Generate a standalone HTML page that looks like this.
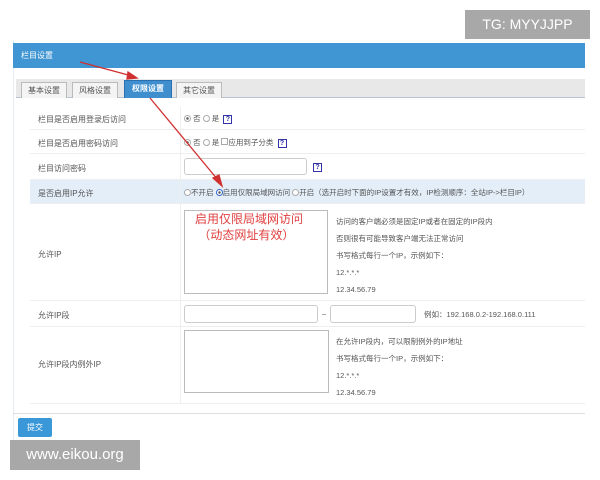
<!DOCTYPE html>
<html><head><meta charset="utf-8"><style>
*{margin:0;padding:0;box-sizing:border-box}
body{width:600px;height:480px;background:#fff;position:relative;overflow:hidden;font-family:"Liberation Sans","Noto Sans CJK SC",sans-serif;font-size:8px;color:#555}
.a{position:absolute}
.tab{position:absolute;top:82px;height:16px;border:1px solid #bbb;border-bottom:none;background:#f4f4f4;font-size:8px;line-height:15px;text-align:center;color:#555}
.row{position:absolute;left:30px;width:555px;border-bottom:1px solid #eee}
.lbl{position:absolute;left:8px;font-size:8px;color:#555}
.in{position:absolute;border:1px solid #ccc;border-radius:3px;background:#fff}
.r{display:inline-block;width:7px;height:7px;border:1px solid #aaa;border-radius:50%;vertical-align:-1px;background:#fff}
.r.on{background:radial-gradient(#555 30%,#fff 40%)}
.q{display:inline-block;width:9px;height:9px;border:1px solid #33a;font-size:7px;line-height:7px;text-align:center;color:#33a;font-weight:bold}
.t{position:absolute;font-size:7.5px;color:#555}
</style></head><body>
<div class="a" style="left:465px;top:10px;width:125px;height:29px;background:#a8a8a8;color:#fff;font-size:14px;line-height:29px;text-align:center">TG: MYYJJPP</div>
<div class="a" style="left:13px;top:40px;width:572px;height:400px;background:#fff;border-left:1px solid #e4ebf2"></div>
<div class="a" style="left:13px;top:43px;width:572px;height:25px;background:#3f96d2;color:#fff;font-size:8px;line-height:25px;padding-left:8px">栏目设置</div>
<div class="a" style="left:16px;top:79px;width:569px;height:19px;background:#e8e8e8;border-bottom:1px solid #b8c4d4"></div>
<div class="tab" style="left:21px;width:46px">基本设置</div>
<div class="tab" style="left:72px;width:46px">风格设置</div>
<div class="tab" style="left:124px;width:48px;background:#3f8fcf;color:#fff;border-color:#2a70b0;top:80px;height:18px;font-weight:bold">权限设置</div>
<div class="tab" style="left:176px;width:46px">其它设置</div>

<div class="row" style="top:107px;height:23px"><span class="lbl" style="top:7px">栏目是否启用登录后访问</span><span class="t" style="left:154px;top:6px"><span class="r on"></span> 否 <span class="r"></span> 是 &nbsp;<span class="q">?</span></span></div>
<div class="row" style="top:130px;height:24px"><span class="lbl" style="top:8px">栏目是否启用密码访问</span><span class="t" style="left:154px;top:7px"><span class="r on"></span> 否 <span class="r"></span> 是 <span style="display:inline-block;width:7px;height:7px;border:1px solid #aaa"></span>应用到子分类 &nbsp;<span class="q">?</span></span></div>
<div class="row" style="top:154px;height:26px"><span class="lbl" style="top:9px">栏目访问密码</span><div class="in" style="left:154px;top:4px;width:123px;height:17px"></div><span class="t" style="left:283px;top:8px"><span class="q">?</span></span></div>
<div class="row" style="top:180px;height:24px;background:#e4eef8"><span class="lbl" style="top:8px">是否启用IP允许</span><span class="t" style="left:154px;top:7px;white-space:nowrap"><span class="r"></span>不开启 <span class="r on" style="border-color:#36c"></span>启用仅限局域网访问 <span class="r"></span>开启（选开启时下面的IP设置才有效，IP检测顺序：全站IP-&gt;栏目IP）</span></div>
<div class="row" style="top:204px;height:97px"><span class="lbl" style="top:45px">允许IP</span>
<div class="in" style="left:154px;top:6px;width:144px;height:84px;border-radius:0;border-color:#bbb"></div>
<div class="a" style="left:165px;top:7px;color:#e04040;font-size:12px;line-height:16px">启用仅限局域网访问<br>&nbsp;（动态网址有效）</div>
<div class="t" style="left:306px;top:9px;line-height:17px">访问的客户端必须是固定IP或者在固定的IP段内<br>否则很有可能导致客户端无法正常访问<br>书写格式每行一个IP，示例如下：<br>12.*.*.*<br>12.34.56.79</div></div>
<div class="row" style="top:301px;height:26px"><span class="lbl" style="top:9px">允许IP段</span>
<div class="in" style="left:154px;top:4px;width:134px;height:18px"></div><span class="t" style="left:292px;top:8px">–</span>
<div class="in" style="left:300px;top:4px;width:86px;height:18px"></div><span class="t" style="left:394px;top:8px">例如：192.168.0.2-192.168.0.111</span></div>
<div class="row" style="top:327px;height:77px"><span class="lbl" style="top:32px">允许IP段内例外IP</span>
<div class="in" style="left:154px;top:3px;width:145px;height:63px;border-radius:0;border-color:#bbb"></div>
<div class="t" style="left:306px;top:6px;line-height:17px">在允许IP段内，可以限制例外的IP地址<br>书写格式每行一个IP，示例如下：<br>12.*.*.*<br>12.34.56.79</div></div>
<div class="a" style="left:180px;top:107px;width:1px;height:297px;background:#eee"></div>
<div class="a" style="left:13px;top:413px;width:572px;height:1px;background:#ddd"></div>
<div class="a" style="left:18px;top:418px;width:34px;height:19px;background:#3a98d8;border-radius:2px;color:#fff;font-size:8px;line-height:19px;text-align:center">提交</div>
<div class="a" style="left:10px;top:440px;width:130px;height:30px;background:#a8a8a8;color:#fff;font-size:15px;line-height:30px;text-align:center">www.eikou.org</div>
<svg class="a" style="left:0;top:0" width="600" height="480"><g stroke="#d03030" stroke-width="1.3" fill="#d03030">
<line x1="80" y1="62" x2="132" y2="76"/><polygon points="137,78 128,72 127,79"/>
<line x1="150" y1="98" x2="218" y2="180"/><polygon points="222,186 213,178 219,175"/></g></svg>
</body></html>
